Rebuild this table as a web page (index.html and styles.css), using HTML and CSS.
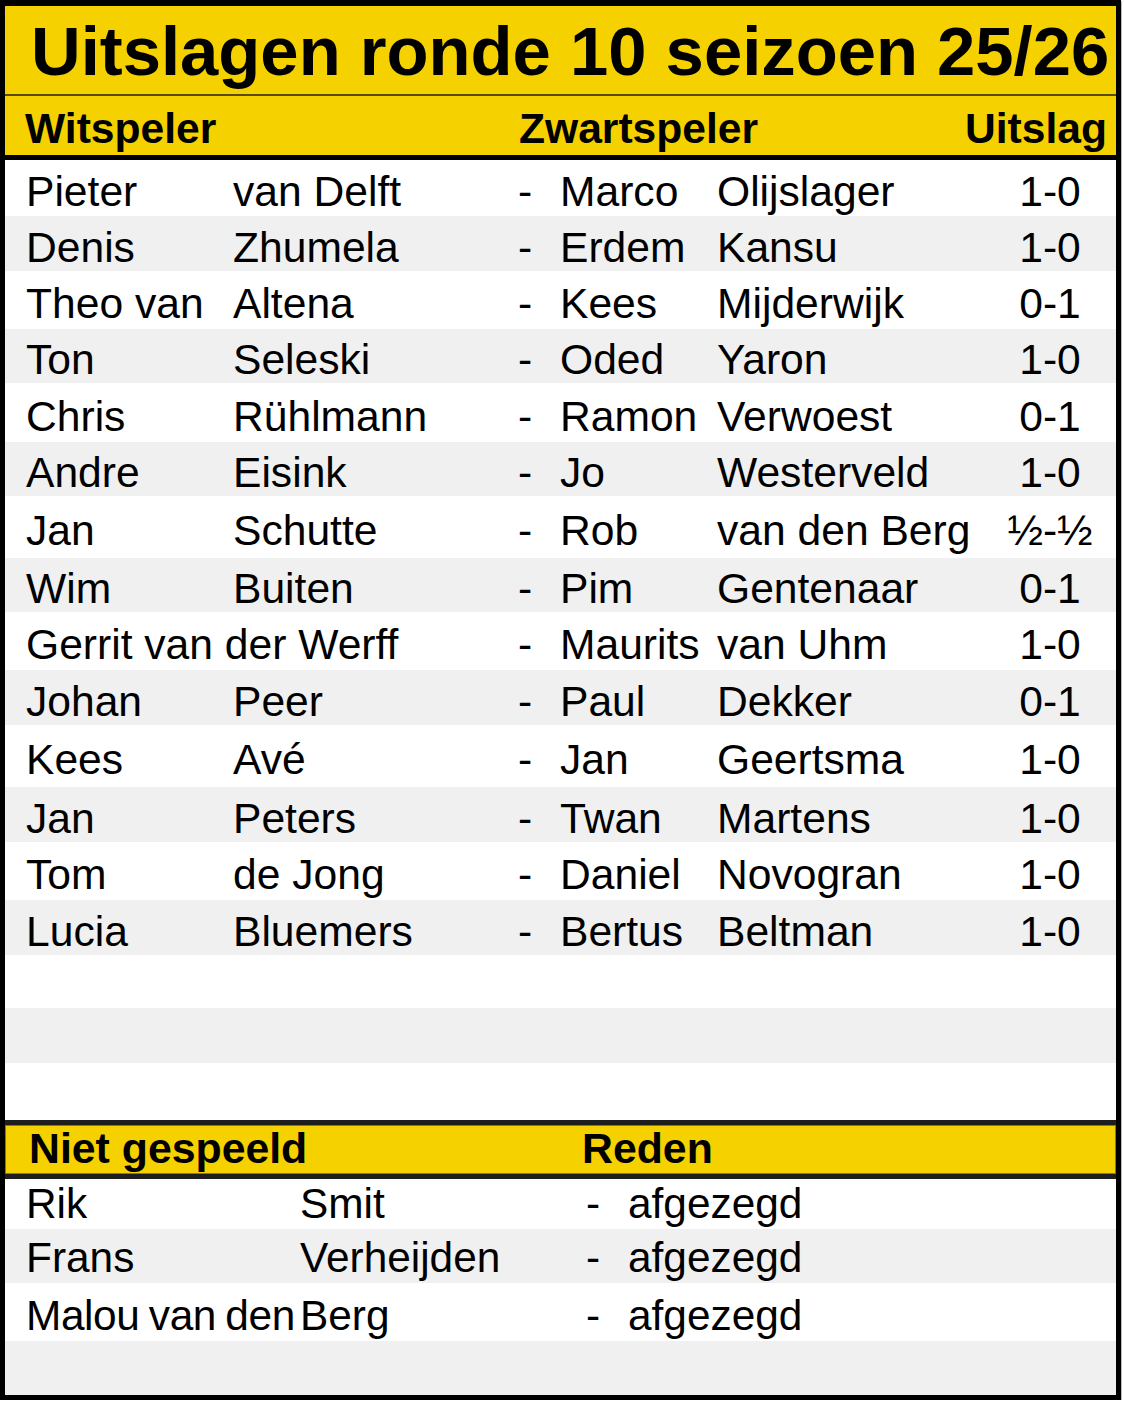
FILE: index.html
```html
<!DOCTYPE html>
<html lang="nl">
<head>
<meta charset="utf-8">
<title>Uitslagen ronde 10 seizoen 25/26</title>
<link rel="stylesheet" href="styles.css">
</head>
<body>
<div class="sheet">
  <div class="title">Uitslagen ronde 10 seizoen 25/26</div>
  <div class="colhead">
    <span>Witspeler</span>
    <span>Zwartspeler</span>
    <span>Uitslag</span>
  </div>

  <div class="row h56"><span class="c1">Pieter</span><span>van Delft</span><span>-</span><span>Marco</span><span>Olijslager</span><span class="res">1-0</span></div>
  <div class="row h55 alt"><span class="c1">Denis</span><span>Zhumela</span><span>-</span><span>Erdem</span><span>Kansu</span><span class="res">1-0</span></div>
  <div class="row h58"><span class="c1">Theo van</span><span>Altena</span><span>-</span><span>Kees</span><span>Mijderwijk</span><span class="res">0-1</span></div>
  <div class="row h54 alt"><span class="c1">Ton</span><span>Seleski</span><span>-</span><span>Oded</span><span>Yaron</span><span class="res">1-0</span></div>
  <div class="row h59"><span class="c1">Chris</span><span>Rühlmann</span><span>-</span><span>Ramon</span><span>Verwoest</span><span class="res">0-1</span></div>
  <div class="row h54 alt"><span class="c1">Andre</span><span>Eisink</span><span>-</span><span>Jo</span><span>Westerveld</span><span class="res">1-0</span></div>
  <div class="row h62"><span class="c1">Jan</span><span>Schutte</span><span>-</span><span>Rob</span><span>van den Berg</span><span class="res">½-½</span></div>
  <div class="row h54 alt"><span class="c1">Wim</span><span>Buiten</span><span>-</span><span>Pim</span><span>Gentenaar</span><span class="res">0-1</span></div>
  <div class="row h58"><span class="c1">Gerrit van der Werff</span><span></span><span>-</span><span>Maurits</span><span>van Uhm</span><span class="res">1-0</span></div>
  <div class="row h55 alt"><span class="c1">Johan</span><span>Peer</span><span>-</span><span>Paul</span><span>Dekker</span><span class="res">0-1</span></div>
  <div class="row h62"><span class="c1">Kees</span><span>Avé</span><span>-</span><span>Jan</span><span>Geertsma</span><span class="res">1-0</span></div>
  <div class="row h55 alt"><span class="c1">Jan</span><span>Peters</span><span>-</span><span>Twan</span><span>Martens</span><span class="res">1-0</span></div>
  <div class="row h58"><span class="c1">Tom</span><span>de Jong</span><span>-</span><span>Daniel</span><span>Novogran</span><span class="res">1-0</span></div>
  <div class="row h55 alt"><span class="c1">Lucia</span><span>Bluemers</span><span>-</span><span>Bertus</span><span>Beltman</span><span class="res">1-0</span></div>
  <div class="row h53"></div>
  <div class="row h55 alt"></div>
  <div class="row h57"></div>

  <div class="band">
    <span>Niet gespeeld</span>
    <span>Reden</span>
  </div>

  <div class="nrow h50"><span class="c1">Rik</span><span>Smit</span><span>-</span><span>afgezegd</span></div>
  <div class="nrow h54 alt"><span class="c1">Frans</span><span>Verheijden</span><span>-</span><span>afgezegd</span></div>
  <div class="nrow h58"><span class="c1 tight">Malou van den</span><span>Berg</span><span>-</span><span>afgezegd</span></div>
  <div class="nrow h54 alt"></div>
</div>
</body>
</html>
```

FILE: styles.css
```css
html, body {
  margin: 0;
  padding: 0;
  background: #ffffff;
}

.sheet {
  width: 1111px;
  border: 5px solid #000;
  border-top-width: 6px;
  background: #ffffff;
  color: #000;
  font-family: "Liberation Sans", Arial, sans-serif;
  box-shadow: 1px 1px 0 #bdbdbd;
}

.title {
  box-sizing: border-box;
  height: 90px;
  background: #f6d100;
  border-bottom: 2px solid #5a4b00;
  display: flex;
  align-items: flex-end;
  padding: 0 0 8px 26px;
  font-size: 68.8px;
  line-height: 68px;
  font-weight: 700;
  white-space: nowrap;
}

.colhead {
  box-sizing: border-box;
  height: 64px;
  background: #f6d100;
  border-bottom: 5px solid #000;
  display: grid;
  grid-template-columns: 494px 1fr auto;
  align-items: end;
  padding: 0 9px 6px 20px;
  font-size: 42.6px;
  line-height: 42px;
  font-weight: 700;
  white-space: nowrap;
}

.row {
  box-sizing: border-box;
  display: grid;
  grid-template-columns: 228px 285px 42px 157px 267px 132px;
  align-items: center;
  padding-top: 6px;
  font-size: 42.6px;
  line-height: 42px;
  white-space: nowrap;
}

.nrow {
  box-sizing: border-box;
  display: grid;
  grid-template-columns: 295px 286px 42px 1fr;
  align-items: end;
  padding-bottom: 4px;
  font-size: 42.4px;
  line-height: 42px;
  white-space: nowrap;
}

.c1 {
  padding-left: 21px;
}

.tight {
  letter-spacing: -0.4px;
  word-spacing: -2px;
}

.res {
  text-align: center;
}

.alt {
  background: #f0f0f0;
}

.band {
  box-sizing: border-box;
  height: 59px;
  background: #f6d100;
  border-top: 5px solid #1e1e1e;
  border-bottom: 5px solid #1e1e1e;
  box-shadow: inset 0 0 0 1px #8f7a00;
  display: grid;
  grid-template-columns: 553px 1fr;
  align-items: end;
  padding: 0 0 5px 24px;
  font-size: 42.8px;
  line-height: 42px;
  font-weight: 700;
  white-space: nowrap;
}

.h50 { height: 50px; }
.h53 { height: 53px; }
.h54 { height: 54px; }
.h55 { height: 55px; }
.h56 { height: 56px; }
.h57 { height: 57px; }
.h58 { height: 58px; }
.h59 { height: 59px; }
.h62 { height: 62px; }
```
